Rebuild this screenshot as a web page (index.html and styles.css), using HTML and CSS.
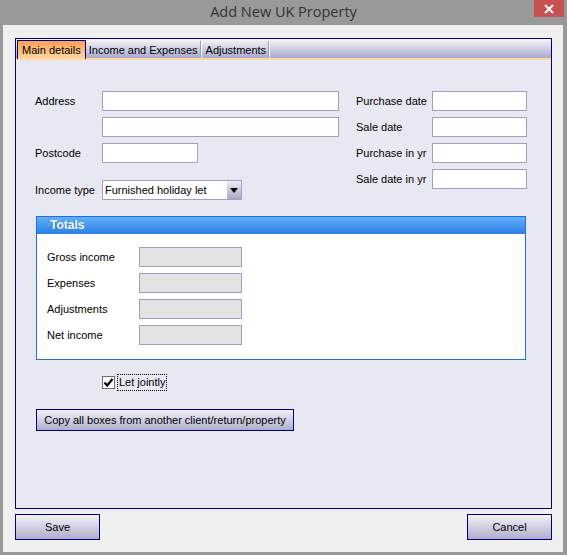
FILE: index.html
```html
<!DOCTYPE html>
<html>
<head>
<meta charset="utf-8">
<link rel="stylesheet" href="styles.css">
</head>
<body>
<div class="window">
  <div class="titlebar">
    <span class="title">Add New UK Property</span>
    <div class="close"><svg width="10" height="10" viewBox="0 0 10 10"><path d="M1 1L9 9M9 1L1 9" stroke="#fff" stroke-width="2"/></svg></div>
  </div>
  <div class="client">
    <div class="panel">
      <div class="tabs">
        <div class="tab active">Main details</div>
        <div class="tab">Income and Expenses</div>
        <div class="tab">Adjustments</div>
      </div>
      <div class="content">
        <div class="top-form">
          <div class="left-col">
            <div class="row"><span class="lbl">Address</span><div class="input w-addr"></div></div>
            <div class="row"><span class="lbl"></span><div class="input w-addr"></div></div>
            <div class="row"><span class="lbl">Postcode</span><div class="input w-post"></div></div>
            <div class="row row-income"><span class="lbl">Income type</span>
              <div class="select"><span class="select-text">Furnished holiday let</span><span class="arrow"><svg width="8" height="5" viewBox="0 0 8 5"><path d="M0 0H8L4 5Z" fill="#000"/></svg></span></div>
            </div>
          </div>
          <div class="right-col">
            <div class="row"><span class="lbl lbl-r">Purchase date</span><div class="input w-date"></div></div>
            <div class="row"><span class="lbl lbl-r">Sale date</span><div class="input w-date"></div></div>
            <div class="row"><span class="lbl lbl-r">Purchase in yr</span><div class="input w-date"></div></div>
            <div class="row"><span class="lbl lbl-r">Sale date in yr</span><div class="input w-date"></div></div>
          </div>
        </div>
        <div class="group">
          <div class="group-head">Totals</div>
          <div class="group-body">
            <div class="row"><span class="lbl lbl-t">Gross income</span><div class="input ro"></div></div>
            <div class="row"><span class="lbl lbl-t">Expenses</span><div class="input ro"></div></div>
            <div class="row"><span class="lbl lbl-t">Adjustments</span><div class="input ro"></div></div>
            <div class="row"><span class="lbl lbl-t">Net income</span><div class="input ro"></div></div>
          </div>
        </div>
        <div class="check-row">
          <span class="checkbox"><svg width="11" height="11" viewBox="0 0 11 11"><path d="M1.5 5.5L4.2 8.5L9.5 2" stroke="#000" stroke-width="2.2" fill="none"/></svg></span>
          <span class="check-label">Let jointly</span>
        </div>
        <div class="btn copy">Copy all boxes from another client/return/property</div>
      </div>
    </div>
    <div class="footer">
      <div class="btn action">Save</div>
      <div class="btn action">Cancel</div>
    </div>
  </div>
</div>
</body>
</html>
```

FILE: styles.css
```css
html, body {
  margin: 0;
  padding: 0;
}
body {
  width: 567px;
  height: 555px;
  background: #999999;
  font-family: "Liberation Sans", Arial, sans-serif;
  font-size: 11px;
  color: #000;
  overflow: hidden;
}
.window {
  display: flex;
  flex-direction: column;
  height: 555px;
}
.titlebar {
  position: relative;
  height: 25px;
  display: flex;
  align-items: center;
  justify-content: center;
}
.title {
  font-family: "Open Sans", "Noto Sans", sans-serif;
  font-size: 14.5px;
  color: #333333;
  margin-top: -2px;
}
.close {
  position: absolute;
  left: 534px;
  top: 0;
  width: 30px;
  height: 17px;
  background: #c75050;
  display: flex;
  align-items: center;
  justify-content: center;
}
.client {
  margin: 0 4px 3px 3px;
  height: 527px;
  background: #f0f0f0;
  padding: 13px 11px 0 12px;
  box-sizing: border-box;
}
.panel {
  width: 537px;
  height: 471px;
  box-sizing: border-box;
  border: 1px solid #000080;
  background: #e8e8f2;
  display: flex;
  flex-direction: column;
}
.tabs {
  height: 19px;
  background: linear-gradient(#f7f7fc, #a9a9cb);
  border-bottom: 2px solid #ffd6a6;
  display: flex;
  align-items: flex-end;
  padding-left: 1px;
}
.tab {
  height: 17px;
  line-height: 19px;
  padding: 0 2px 0 3px;
  white-space: nowrap;
  border-right: 1px solid #9a9ab0;
  box-shadow: 1px 0 0 #ffffff;
  margin-right: 2px;
  font-size: 11px;
}
.tab.active {
  height: 18px;
  line-height: 19px;
  padding: 0 4px;
  margin-bottom: -1px;
  background: linear-gradient(#ff9f55, #ffd9a3);
  border: 1px solid #000080;
  border-bottom: none;
  box-shadow: none;
  margin-right: 0;
}
.content {
  padding: 31px 0 0 19px;
  display: flex;
  flex-direction: column;
  align-items: flex-start;
}
.top-form {
  display: flex;
}
.left-col {
  width: 304px;
  display: flex;
  flex-direction: column;
  gap: 6px;
}
.right-col {
  margin-left: 17px;
  display: flex;
  flex-direction: column;
  gap: 6px;
}
.row {
  display: flex;
  align-items: center;
  height: 20px;
}
.row-income {
  margin-top: 11px;
}
.lbl {
  width: 67px;
  flex: none;
  white-space: nowrap;
}
.lbl-r {
  width: 76px;
}
.input {
  height: 20px;
  box-sizing: border-box;
  border: 1px solid #a29ec4;
  background: #fff;
}
.w-addr { width: 237px; }
.w-post { width: 96px; }
.w-date { width: 95px; }
.select {
  width: 140px;
  height: 20px;
  box-sizing: border-box;
  border: 1px solid #a29ec4;
  background: #fff;
  display: flex;
  align-items: center;
}
.select-text {
  flex: 1;
  padding-left: 2px;
  font-size: 11px;
}
.arrow {
  width: 14px;
  height: 18px;
  background: linear-gradient(#ececf6, #a9a9c6);
  display: flex;
  align-items: center;
  justify-content: center;
}
.group {
  margin-top: 16px;
  margin-left: 1px;
  width: 490px;
  height: 144px;
  box-sizing: border-box;
  border: 1px solid #2370d4;
  background: #fff;
}
.group-head {
  height: 17px;
  line-height: 16px;
  background: linear-gradient(#62b0fa, #2b80e6);
  color: #fff;
  font-weight: bold;
  font-size: 12px;
  padding-left: 13px;
  text-shadow: 0 0 1px #1a5fb8;
}
.group-body {
  padding: 13px 0 0 10px;
  display: flex;
  flex-direction: column;
  gap: 6px;
}
.lbl-t {
  width: 92px;
}
.input.ro {
  width: 103px;
  background: #e3e3e3;
}
.check-row {
  margin-top: 14px;
  margin-left: 67px;
  display: flex;
  align-items: center;
  height: 17px;
}
.checkbox {
  width: 13px;
  height: 13px;
  box-sizing: border-box;
  border: 1px solid #707070;
  background: #fff;
  display: flex;
  align-items: center;
  justify-content: center;
}
.check-label {
  margin-left: 2px;
  padding: 1px 1px;
  border: 1px dotted #000;
  line-height: 13px;
}
.btn {
  box-sizing: border-box;
  border: 1px solid #000080;
  background: linear-gradient(#f2f2f9, #aeaeca);
  display: flex;
  align-items: center;
  justify-content: center;
  white-space: nowrap;
}
.copy {
  margin-top: 18px;
  margin-left: 1px;
  width: 258px;
  height: 22px;
}
.footer {
  width: 537px;
  margin-top: 5px;
  display: flex;
  justify-content: space-between;
}
.action {
  width: 85px;
  height: 26px;
}
```
